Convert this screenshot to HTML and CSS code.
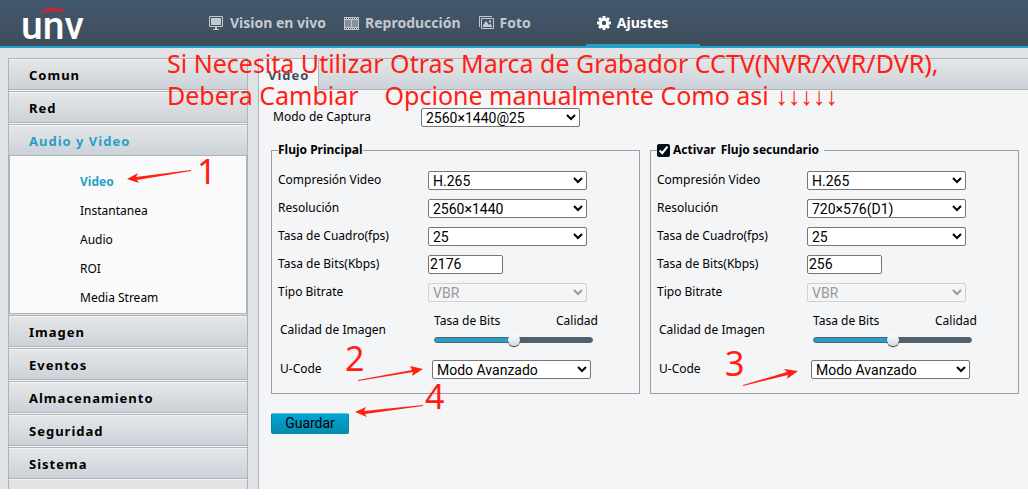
FILE: index.html
```html
<!DOCTYPE html>
<html lang="es">
<head>
    <meta charset="UTF-8">
    <meta name="viewport" content="width=device-width, initial-scale=1.0">
    <title>UNV | Ajustes</title>
    <link rel="stylesheet" href="styles.css">
</head>
<body>
<div class="page">
    <header class="topbar">
        <svg class="logo" width="64" height="36" viewBox="0 0 64 36" role="img" aria-label="unv">
            <path d="M17.500 9C24 1 38 1 44.500 9C36 5 26 5 17.500 9Z" fill="#e02020"/>
            <text x="-1" y="34" class="logo-text">unv</text>
        </svg>
        <nav class="mainnav">
            <a href="#">
                <svg width="15" height="15" viewBox="0 0 15 15"><path d="M.5 .5h13v10H.5z" fill="none" stroke="#c3c9d1"/><path d="M2 2h10v7H2zM6 11h2v2H6zM4 13h6v1H4z" fill="#c3c9d1"/></svg>
                <span>Vision en vivo</span>
            </a>
            <a href="#">
                <svg width="15" height="13" viewBox="0 0 15 13"><path fill="#c3c9d1" fill-rule="evenodd" d="M0 0h15v13H0zM1 1v1h1V1zM3 1v1h1V1zM5 1v1h1V1zM7 1v1h1V1zM9 1v1h1V1zM11 1v1h1V1zM13 1v1h1V1zM1 11v1h1v-1zM3 11v1h1v-1zM5 11v1h1v-1zM7 11v1h1v-1zM9 11v1h1v-1zM11 11v1h1v-1zM13 11v1h1v-1z"/><path d="M1 3h6v7H1zM8 3h6v7H8z" fill="#84909c"/></svg>
                <span>Reproducción</span>
            </a>
            <a href="#">
                <svg width="15" height="14" viewBox="0 0 15 14"><path d="M2.500 2.500h12v10h-12z M.5 11V.5H13" fill="none" stroke="#c3c9d1"/><path d="M4 11V9l3-4 3 4 1.500-1.500L13 10v1z" fill="#c3c9d1"/><circle cx="11" cy="5.500" r="1.200" fill="#c3c9d1"/></svg>
                <span>Foto</span>
            </a>
            <a href="#" class="active">
                <svg width="14" height="14" viewBox="-7 -7 14 14"><g fill="#fff"><path d="M-1.500-7h3v14h-3z"/><path d="M-1.500-7h3v14h-3z" transform="rotate(45)"/><path d="M-1.500-7h3v14h-3z" transform="rotate(90)"/><path d="M-1.500-7h3v14h-3z" transform="rotate(135)"/><circle r="5.200"/></g><circle r="2.200" fill="#42535f"/></svg>
                <span>Ajustes</span>
            </a>
        </nav>
    </header>

    <div class="content">
        <aside class="sidebar">
            <a href="#" class="menu">Comun</a>
            <a href="#" class="menu">Red</a>
            <a href="#" class="menu open">Audio y Video</a>
            <div class="submenu">
                <a href="#" class="selected">Video</a>
                <a href="#">Instantanea</a>
                <a href="#">Audio</a>
                <a href="#">ROI</a>
                <a href="#">Media Stream</a>
            </div>
            <a href="#" class="menu">Imagen</a>
            <a href="#" class="menu">Eventos</a>
            <a href="#" class="menu">Almacenamiento</a>
            <a href="#" class="menu">Seguridad</a>
            <a href="#" class="menu">Sistema</a>
        </aside>

        <main class="panel">
            <div class="tabs"><a href="#" class="tab">Video</a></div>
            <form class="settings">
                <div class="row capture">
                    <label for="capture">Modo de Captura</label>
                    <select id="capture"><option>2560×1440@25</option></select>
                </div>

                <div class="streams">
                    <fieldset>
                        <legend>Flujo Principal</legend>
                        <div class="row"><label for="codec1">Compresión Video</label><select id="codec1"><option>H.265</option></select></div>
                        <div class="row"><label for="res1">Resolución</label><select id="res1"><option>2560×1440</option></select></div>
                        <div class="row"><label for="fps1">Tasa de Cuadro(fps)</label><select id="fps1"><option>25</option></select></div>
                        <div class="row"><label for="rate1">Tasa de Bits(Kbps)</label><input type="text" id="rate1" value="2176"></div>
                        <div class="row"><label for="type1">Tipo Bitrate</label><select id="type1" disabled><option>VBR</option></select></div>
                        <div class="row quality">
                            <label for="quality1">Calidad de Imagen</label>
                            <div class="slider">
                                <div class="ends"><span>Tasa de Bits</span><span>Calidad</span></div>
                                <input type="range" id="quality1" min="0" max="100" value="50">
                            </div>
                        </div>
                        <div class="row ucode"><label for="ucode1">U-Code</label><select id="ucode1"><option>Modo Avanzado</option></select></div>
                    </fieldset>

                    <fieldset>
                        <legend class="check"><input type="checkbox" id="sub" checked><label for="sub">Activar</label><span>Flujo secundario</span></legend>
                        <div class="row"><label for="codec2">Compresión Video</label><select id="codec2"><option>H.265</option></select></div>
                        <div class="row"><label for="res2">Resolución</label><select id="res2"><option>720×576(D1)</option></select></div>
                        <div class="row"><label for="fps2">Tasa de Cuadro(fps)</label><select id="fps2"><option>25</option></select></div>
                        <div class="row"><label for="rate2">Tasa de Bits(Kbps)</label><input type="text" id="rate2" value="256"></div>
                        <div class="row"><label for="type2">Tipo Bitrate</label><select id="type2" disabled><option>VBR</option></select></div>
                        <div class="row quality">
                            <label for="quality2">Calidad de Imagen</label>
                            <div class="slider">
                                <div class="ends"><span>Tasa de Bits</span><span>Calidad</span></div>
                                <input type="range" id="quality2" min="0" max="100" value="50">
                            </div>
                        </div>
                        <div class="row ucode"><label for="ucode2">U-Code</label><select id="ucode2"><option>Modo Avanzado</option></select></div>
                    </fieldset>
                </div>

                <button type="button" class="save">Guardar</button>
            </form>
        </main>
    </div>
</div>

<!-- red notes over the page -->
<p class="note">Si Necesita Utilizar Otras Marca de Grabador CCTV(NVR/XVR/DVR),
Debera Cambiar    Opcione manualmente Como asi <span class="down">↓↓↓↓↓</span></p>
<svg class="marks" width="1028" height="495" viewBox="0 0 1028 495">
    <path d="M127 179l11-6-2 4 55-7v1l-54 9 2 3z"/>
    <path d="M423 369l-11 7 1-4-55 9v-1l54-10-2-4z"/>
    <path d="M798 371l-11 8 1-4-45 11v-1l44-13-3-3z"/>
    <path d="M355 412l11-5-2 4 59-6v1l-58 8 2 3z"/>
    <text x="197" y="184">1</text>
    <text x="345" y="371">2</text>
    <text x="725" y="376">3</text>
    <text x="425" y="409">4</text>
</svg>
</body>
</html>
```

FILE: styles.css
```css
* { box-sizing: border-box; }
body, html { margin: 0; padding: 0; height: 100%; overflow: hidden; background: #fff; }
body { font: 12px/16px "Noto Sans", "Open Sans", sans-serif; color: #000; }
a { text-decoration: none; color: inherit; }
.page {
    height: calc(100% - 6px); overflow: hidden; background: #dfe3e6;
    display: flex; flex-direction: column;
}

.topbar {
    flex: none; display: flex; height: 48px;
    background: linear-gradient(#43586e, #3f4d5a); border-bottom: 2px solid #26a0c8;
}
.logo { margin: 5px 0 0 22px; overflow: visible; }
.logo-text { font: 500 39px Roboto, sans-serif; fill: #fff; }
.mainnav { display: flex; margin-left: 114px; }
.mainnav a {
    display: flex; align-items: center; gap: 6px; padding: 0 9px;
    color: #c3c9d1; font-size: 14px; font-weight: bold;
}
.mainnav .active {
    width: 114px; margin-left: 46px; padding: 2px 11px 0;
    color: #fff; border-bottom: 2px solid #26a0c8;
}

.content { flex: 1; min-height: 0; display: flex; gap: 10px; padding: 10px 0 0 8px; }
.sidebar { flex: none; width: 240px; border: 1px solid #afb3b7; border-width: 0 1px; }
.menu {
    display: block; height: 32px; margin-bottom: 1px; padding-left: 20px;
    border: 1px solid #afb3b7; border-width: 1px 0; box-shadow: inset 0 1px #f4f5f6, 0 1px #f4f5f6;
    background: linear-gradient(#e4e7e9, #d9dde0 50%, #cad1d9);
    font-size: 13px; font-weight: bold; line-height: 32px; letter-spacing: 1px;
}
.open { margin-bottom: 0; color: #26a0c8; }
.submenu {
    margin-bottom: 1px; padding: 11px 0 1px 70px; background: #fafafa;
    border: 1px solid #afb3b7; border-top: 0;
}
.submenu a { display: block; line-height: 29px; }
.submenu .selected { color: #26a0c8; font-weight: bold; }

.panel { flex: 1; background: #f4f5f7; border: 1px solid #afb3b7; border-width: 1px 0 0 1px; }
.tabs {
    display: flex; height: 31px; border-bottom: 1px solid #afb3b7;
    background: linear-gradient(#e4e7e9, #d9dde0 50%, #cad1d9);
}
.tab {
    height: 31px; padding: 0 9px; background: #f4f5f7; border-right: 1px solid #afb3b7;
    color: #3f4d5a; font-size: 13px; font-weight: bold; line-height: 32px; letter-spacing: 1px;
}
.settings { padding: 13px 9px 0 12px; }
.row { display: flex; align-items: center; height: 28px; }
.row > label { flex: none; width: 150px; }
.capture { padding-left: 2px; }
.capture > label { width: 148px; }
select, input[type=text] {
    width: 159px; height: 19px; margin: 0; border: 1px solid #767676; border-radius: 2px;
    background: #fff; color: #000; font: 14px Roboto, Arial, sans-serif;
}
select { padding: 0; }
select:disabled { background: #f4f5f7; border-color: #d0d1d3; color: #999; opacity: 1; }
input[type=text] { width: 75px; padding: 0 1px; }

.streams { display: flex; gap: 10px; margin-top: 9px; }
fieldset { flex: 1; min-width: 0; margin: 0; padding: 6px 6px 7px; border: 1px solid #9a9ea2; }
legend { height: 20px; padding: 0; font-size: 12px; font-weight: bold; line-height: 20px; }
.check { display: flex; align-items: center; gap: 3px; padding-right: 5px; }
.check input { width: 13px; height: 13px; margin: 0; accent-color: #000c18; }
.check span { margin-left: 2px; }
.quality { height: 46px; padding: 2px 0 0 2px; }
.quality > label { width: 154px; }
.ucode { height: 34px; padding-left: 2px; }
.ucode > label { width: 152px; }
.slider { width: 164px; }
.ends { display: flex; justify-content: space-between; }
input[type=range] {
    -webkit-appearance: none; appearance: none; display: block;
    width: 159px; height: 14px; margin: 4px 0 0; background: none;
}
input[type=range]::-webkit-slider-runnable-track {
    height: 6px; border: 1px solid #53616f; border-radius: 3px;
    background: linear-gradient(90deg, #26a0c8 50%, #53616f 50%);
}
input[type=range]::-webkit-slider-thumb {
    -webkit-appearance: none; width: 12px; height: 12px; margin-top: -4px;
    border-radius: 50%; background: linear-gradient(#fff, #d5d9dd); box-shadow: 0 1px 1px #222;
}
.save {
    display: block; width: 78px; height: 21px; margin-top: 19px; padding: 0 0 2px;
    border: 1px solid #0784a6; border-top-color: #5cc0dc; border-radius: 2px;
    background: linear-gradient(#04a5d4, #078bb0); color: #000;
    font: 14px Roboto, sans-serif;
}

.note {
    position: absolute; top: 47px; left: 167px; margin: 0; white-space: pre;
    color: #ff2013; font-size: 25px; line-height: 32px;
}
.down { font-family: "Liberation Serif", serif; }
.marks { position: absolute; top: 0; left: 0; fill: #ff2013; pointer-events: none; }
.marks text { font-size: 34px; }
```
